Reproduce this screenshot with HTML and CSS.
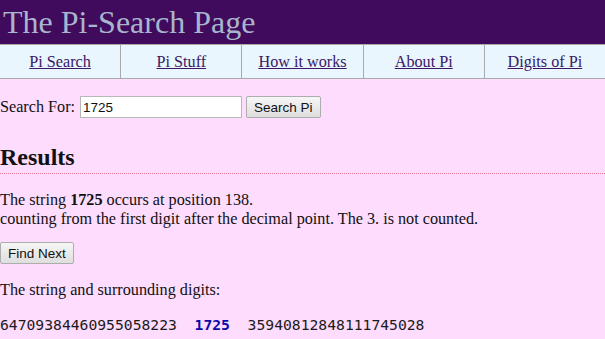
FILE: index.html
```html
<!DOCTYPE html>
<html lang="en">

<head>
  <meta charset="UTF-8">
  <meta name="viewport" content="width=device-width, initial-scale=1.0">
  <title>The Pi-Search Page</title>

  <link rel="stylesheet" href="styles.css">
</head>

<body>
  <header class="banner">
    <h1>The Pi-Search Page</h1>
  </header>

  <nav class="menu">
    <div class="menu-item"><a href="#">Pi Search</a></div>
    <div class="menu-item"><a href="#">Pi Stuff</a></div>
    <div class="menu-item"><a href="#">How it works</a></div>
    <div class="menu-item"><a href="#">About Pi</a></div>
    <div class="menu-item"><a href="#">Digits of Pi</a></div>
  </nav>

  <main>
    <form class="search" onsubmit="return false;">
      <label for="query">Search For:</label>
      <input type="text" id="query" value="1725">
      <button type="submit">Search Pi</button>
    </form>

    <h2 class="results">Results</h2>

    <p class="found">
      The string <b>1725</b> occurs at position 138.<br>
      counting from the first digit after the decimal point. The 3. is not counted.
    </p>

    <button class="next">Find Next</button>

    <p class="around">The string and surrounding digits:</p>

    <div class="digits">64709384460955058223&nbsp;&nbsp;<span class="hit">1725</span>&nbsp;&nbsp;35940812848111745028</div>
  </main>
</body>

</html>
```

FILE: styles.css
```css
html,
body {
  margin: 0;
  padding: 0;
  overflow: hidden;
}

body {
  background-color: #fedcfe;
  font-family: "Liberation Serif", serif;
  font-size: 16.2px;
  color: #111;
}

.banner {
  background-color: #400b5c;
  height: 44px;
}

.banner h1 {
  margin: 0;
  padding-left: 3px;
  font-weight: normal;
  font-size: 32px;
  line-height: 44px;
  color: #a7b6cc;
}

.menu {
  display: flex;
  background-color: #e9f6fd;
  border-top: 1px solid #a9a9a9;
  border-bottom: 1px solid #a9a9a9;
}

.menu-item {
  flex: 1;
  text-align: center;
  height: 33px;
  line-height: 34px;
  border-left: 1px solid #a9a9a9;
}

.menu-item:first-child {
  border-left: none;
}

.menu a {
  color: #3a1866;
}

.search {
  display: flex;
  align-items: center;
  gap: 4px;
  margin-top: 17px;
}

.search label {
  margin-right: 1px;
}

.search input {
  width: 156px;
  height: 18px;
  padding: 1px 2px;
  border: 1px solid #b8b8b8;
  font-family: "Liberation Sans", Arial, sans-serif;
  font-size: 13.5px;
  color: #111;
}

button {
  font-family: "Liberation Sans", Arial, sans-serif;
  font-size: 13.5px;
  height: 22px;
  padding: 1px 7px;
  color: #111;
  background: linear-gradient(#f6f6f6, #dedede);
  border: 1px solid #adadad;
  border-radius: 2px;
}

.results {
  margin: 26px 0 0;
  font-size: 24px;
  padding-bottom: 2px;
  border-bottom: 1px dotted #f07898;
}

.found {
  margin: 17px 0 13px;
}

.around {
  margin: 17px 0 16px;
}

.digits {
  font-family: "DejaVu Sans Mono", monospace;
  font-size: 14.7px;
  color: #1a1a1a;
}

.hit {
  color: #0a0aa8;
  font-weight: bold;
}
```
